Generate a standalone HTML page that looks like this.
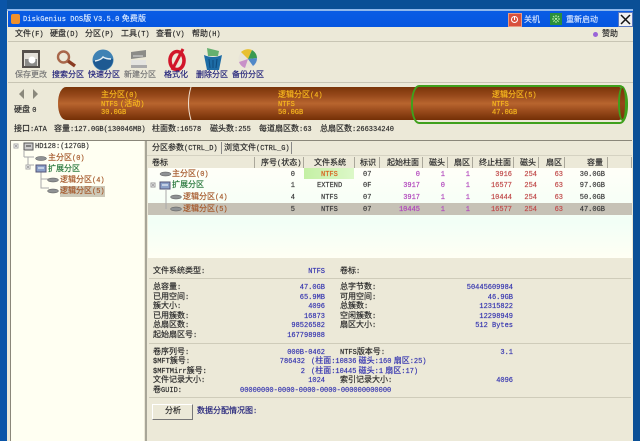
<!DOCTYPE html>
<html><head><meta charset="utf-8"><style>
html,body{margin:0;padding:0;background:#0a4f96}
#w{position:relative;width:640px;height:441px;overflow:hidden;background:#0a4f96;font-family:"Liberation Sans","WenQuanYi Zen Hei","Noto Sans CJK SC",sans-serif;filter:blur(.2px)}
#w div{position:absolute}
.t{position:absolute;font-size:8px;line-height:10px;height:10px;white-space:nowrap;color:#2a2a2a;-webkit-text-stroke:.18px currentColor}
.t i,.m{font-family:"Liberation Mono",monospace;font-style:normal;font-size:7px}
.r{text-align:right;transform:translateX(-100%)}
.n{color:#3636b0}
.g{color:#555}
.b{color:#22227a}
.y{color:#f8b81e}
.o{color:#a5582a}
.p{color:#b044bc}
.d{color:#c04a4a}
.k{color:#3a3a3a}
.s{width:1px;top:157px;height:11px;background:#aaa79a}
.l{left:149px;height:1px;width:482px;background:#cfccba}
svg{position:absolute;overflow:visible}
</style></head><body><div id="w">
<div style="left:0;top:0;width:7px;height:441px;background:#0a55a8"></div>
<div style="left:7px;top:9px;width:626px;height:432px;background:#ece9d8"></div>
<div style="left:7px;top:9px;width:626px;height:2px;background:#8fb8ec"></div>
<div style="left:8px;top:11px;width:625px;height:16px;background:linear-gradient(#0a5ce4,#0656e0)"></div>
<div style="left:11px;top:14px;width:9px;height:10px;background:#f0902c;border-radius:2px"></div>
<span class="t" style="left:23px;top:14px;color:#d8e8ff;letter-spacing:.1px"><i>DiskGenius DOS</i>版 <i>V3.5.0</i> 免费版</span>
<div style="left:508px;top:13px;width:12px;height:12px;background:#d8503c;border:1px solid #e89a80"></div>
<svg style="left:510px;top:15px" width="10" height="10"><circle cx="4.5" cy="4.5" r="3" fill="none" stroke="#fff"/><path d="M4.5 2v3" stroke="#fff"/></svg>
<span class="t" style="left:524px;top:15px;color:#cfe0ff">关机</span>
<div style="left:550px;top:13px;width:12px;height:12px;background:#2a8f3c"></div>
<svg style="left:551px;top:14px" width="10" height="10"><path d="M5 1v8M1 5h8M2 2l6 6M8 2l-6 6" stroke="#b8f0a8" stroke-dasharray="2 1"/></svg>
<span class="t" style="left:566px;top:15px;color:#cfe0ff">重新启动</span>
<div style="left:618px;top:12px;width:13px;height:13px;background:#f0f0f0;border:1px solid #5a78c0"></div>
<svg style="left:619px;top:13px" width="13" height="13"><path d="M2 2l9 9M11 2l-9 9" stroke="#111" stroke-width="1.5"/></svg>

<span class="t" style="left:15px;top:29px">文件<i>(F)</i></span>
<span class="t" style="left:50px;top:29px">硬盘<i>(D)</i></span>
<span class="t" style="left:85px;top:29px">分区<i>(P)</i></span>
<span class="t" style="left:121px;top:29px">工具<i>(T)</i></span>
<span class="t" style="left:156px;top:29px">查看<i>(V)</i></span>
<span class="t" style="left:192px;top:29px">帮助<i>(H)</i></span>
<div style="left:593px;top:32px;width:5px;height:5px;border-radius:50%;background:#9a64d8"></div>
<span class="t" style="left:602px;top:29px">赞助</span>
<div style="left:8px;top:41px;width:625px;height:1px;background:#c8c5b4"></div>

<svg style="left:22px;top:50px" width="19" height="18"><rect width="18" height="18" fill="#55504c"/><rect x="2" y="3" width="14" height="13" fill="#e2dfd8"/><rect x="3" y="9" width="12" height="7" fill="#8a8a88"/><circle cx="10" cy="10" r="3.5" fill="#fff"/></svg>
<svg style="left:56px;top:50px" width="23" height="18"><circle cx="7.5" cy="7" r="5.5" fill="none" stroke="#a8674a" stroke-width="2.4"/><path d="M12 11l7 5" stroke="#8a3c22" stroke-width="3.4"/></svg>
<svg style="left:92px;top:49px" width="22" height="22"><circle cx="11" cy="11" r="10.5" fill="#3f82b4"/><path d="M1 12q10-4 20-2q0 8-8 11q-10 0-12-9z" fill="#1e5a92"/><path d="M3 12q6-1 8-4q3 2 8 2" stroke="#e8f0f4" fill="none" stroke-width="1.4"/></svg>
<svg style="left:130px;top:50px" width="18" height="19"><path d="M1 2l15-2v7l-15 2z" fill="#8c8c88"/><path d="M1 10h15v5h-15z" fill="#e4e4e0"/><path d="M1 15h16v3h-16z" fill="#aaa"/><path d="M3 6h10" stroke="#ddd"/></svg>
<svg style="left:167px;top:48px" width="21" height="23"><ellipse cx="10" cy="12.500" rx="7" ry="9" fill="none" stroke="#d2162a" stroke-width="3.6"/><path d="M16 1l-11 21" stroke="#d2162a" stroke-width="3"/></svg>
<svg style="left:203px;top:48px" width="20" height="23"><path d="M4 0l12 3-1 5h-10z" fill="#66b070"/><path d="M1 7q9 4 18 0l-3 15h-12z" fill="#1d6ca6"/><path d="M6 11l1 9M10 12v8M14 11l-1 9" stroke="#0e4a7c"/></svg>
<svg style="left:238px;top:49px" width="20" height="21"><circle cx="10" cy="10" r="9.500" fill="#e8e4d8"/><path d="M10 10l-7-7a10 10 0 0 1 11-2z" fill="#e8c030"/><path d="M10 10l4-9a10 10 0 0 1 5 8z" fill="#3a9a50"/><path d="M10 10l9-1a10 10 0 0 1-4 8z" fill="#5088c8"/><path d="M10 10l-3 9a10 10 0 0 1-6-6z" fill="#c890c8"/></svg>

<span class="t" style="left:15px;top:70px;color:#777">保存更改</span>
<span class="t b" style="left:52px;top:70px">搜索分区</span>
<span class="t b" style="left:88px;top:70px">快速分区</span>
<span class="t" style="left:124px;top:70px;color:#777">新建分区</span>
<span class="t b" style="left:164px;top:70px">格式化</span>
<span class="t b" style="left:196px;top:70px">删除分区</span>
<span class="t b" style="left:232px;top:70px">备份分区</span>
<div style="left:8px;top:82px;width:625px;height:1px;background:#c8c5b4"></div>

<svg style="left:15px;top:88px" width="24" height="12"><path d="M9 1l-5 5 5 5zM18 1l5 5-5 5z" fill="#8a887c"/></svg>
<span class="t" style="left:14px;top:105px">硬盘 <i>0</i></span>

<div style="left:58px;top:87px;width:569px;height:33px;border-radius:8px/16px;background:linear-gradient(#7a3509,#96481a 25%,#b8652f 50%,#96481a 75%,#743006)"></div>
<svg style="left:186px;top:87px" width="8" height="33"><path d="M5 0q-5 16 0 33" fill="none" stroke="#f0e0d0"/></svg>
<div style="left:411px;top:85px;width:213px;height:35px;border:2px solid #3fa01c;border-radius:8px/18px"></div>
<div style="left:618px;top:86px;width:9px;height:35px;border:2px solid #3fa01c;border-radius:50%;box-sizing:border-box;background:linear-gradient(#7a3509,#94461a,#7a3509)"></div>

<span class="t y" style="left:101px;top:90px">主分区<i>(0)</i></span>
<span class="t y" style="left:101px;top:99px"><i>NTFS</i> <i>(</i>活动<i>)</i></span>
<span class="t y" style="left:101px;top:107px"><i>30.0GB</i></span>
<span class="t y" style="left:278px;top:90px">逻辑分区<i>(4)</i></span>
<span class="t y" style="left:278px;top:99px"><i>NTFS</i></span>
<span class="t y" style="left:278px;top:107px"><i>50.0GB</i></span>
<span class="t y" style="left:492px;top:90px">逻辑分区<i>(5)</i></span>
<span class="t y" style="left:492px;top:99px"><i>NTFS</i></span>
<span class="t y" style="left:492px;top:107px"><i>47.0GB</i></span>

<span class="t" style="left:14px;top:124px">接口<i>:ATA</i></span>
<span class="t" style="left:54px;top:124px">容量<i>:127.0GB(130046MB)</i></span>
<span class="t" style="left:152px;top:124px">柱面数<i>:16578</i></span>
<span class="t" style="left:210px;top:124px">磁头数<i>:255</i></span>
<span class="t" style="left:259px;top:124px">每道扇区数<i>:63</i></span>
<span class="t" style="left:320px;top:124px">总扇区数<i>:266334240</i></span>
<div style="left:10px;top:140px;width:622px;height:1px;background:#8a877a"></div>

<div style="left:10px;top:141px;width:133px;height:300px;background:#fffff2;border-left:1px solid #8a877a"></div>
<div style="left:145px;top:141px;width:2px;height:300px;background:#a8a698"></div>
<div style="left:147px;top:141px;width:485px;height:300px;background:#ece9d8"></div>
<div style="left:148px;top:168px;width:484px;height:90px;background:linear-gradient(#fffff8,#f2fff6 60%,#fffff4)"></div>

<svg style="left:13px;top:143px" width="50" height="60"><rect x="1" y="1" width="4" height="4" fill="#fff" stroke="#aaa"/><path d="M2 3h2" stroke="#555"/><path d="M11 8v6M11 14h10M15 14v8M15 22h6M28 28v17h8M36 36h-8" stroke="#aaa" fill="none"/><rect x="11" y="0" width="9" height="7" fill="#ccc" stroke="#555"/><path d="M13 3h5" stroke="#333"/></svg>
<svg style="left:26px;top:154px" width="40" height="45"><g fill="#8f9294" stroke="#555" stroke-width=".5"><ellipse cx="15" cy="4.500" rx="5.500" ry="2"/><ellipse cx="27" cy="26" rx="5.500" ry="2"/><ellipse cx="27" cy="37" rx="5.500" ry="2"/></g><rect x="0" y="11" width="4" height="4" fill="#fff" stroke="#aaa"/><path d="M1 13h2" stroke="#555"/><rect x="10" y="11" width="10" height="7" fill="#8aa0c8" stroke="#557"/><path d="M12 14h6" stroke="#fff"/></svg>
<span class="t" style="left:35px;top:141px;color:#333"><i>HD128:(127GB)</i></span>
<span class="t o" style="left:48px;top:153px">主分区<i>(0)</i></span>
<span class="t" style="left:48px;top:164px;color:#28783c">扩展分区</span>
<span class="t o" style="left:60px;top:175px">逻辑分区<i>(4)</i></span>
<div style="left:60px;top:186px;width:45px;height:11px;background:#cdc9b8"></div>
<span class="t o" style="left:60px;top:186px">逻辑分区<i>(5)</i></span>

<span class="t" style="left:152px;top:143px">分区参数<i>(CTRL_D)</i></span>
<div style="left:221px;top:142px;width:1px;height:12px;background:#888"></div>
<span class="t" style="left:224px;top:143px">浏览文件<i>(CTRL_G)</i></span>
<div style="left:291px;top:142px;width:1px;height:12px;background:#888"></div>
<div style="left:147px;top:155px;width:485px;height:1px;background:#d5d2c2"></div>

<span class="t" style="left:152px;top:158px">卷标</span>
<span class="t" style="left:261px;top:158px">序号<i>(</i>状态<i>)</i></span>
<span class="t" style="left:314px;top:158px">文件系统</span>
<span class="t" style="left:360px;top:158px">标识</span>
<span class="t" style="left:387px;top:158px">起始柱面</span>
<span class="t" style="left:429px;top:158px">磁头</span>
<span class="t" style="left:454px;top:158px">扇区</span>
<span class="t" style="left:479px;top:158px">终止柱面</span>
<span class="t" style="left:520px;top:158px">磁头</span>
<span class="t" style="left:546px;top:158px">扇区</span>
<span class="t" style="left:587px;top:158px">容量</span>
<div class="s" style="left:254px"></div><div class="s" style="left:303px"></div><div class="s" style="left:354px"></div><div class="s" style="left:379px"></div><div class="s" style="left:422px"></div><div class="s" style="left:447px"></div><div class="s" style="left:472px"></div><div class="s" style="left:513px"></div><div class="s" style="left:538px"></div><div class="s" style="left:564px"></div><div class="s" style="left:607px"></div><div class="s" style="left:631px"></div>

<div style="left:148px;top:203px;width:484px;height:12px;background:#c6c2b6"></div>
<div style="left:304px;top:168px;width:50px;height:11px;background:linear-gradient(90deg,#c4f0a4,#dcf8c8)"></div>

<svg style="left:150px;top:168px" width="40" height="46"><g fill="#8f9294" stroke="#555" stroke-width=".5"><ellipse cx="15.500" cy="6" rx="5.500" ry="2"/><ellipse cx="26" cy="29" rx="5.500" ry="2"/><ellipse cx="26" cy="41" rx="5.500" ry="2"/></g><rect x="1" y="15" width="4" height="4" fill="#fff" stroke="#999"/><path d="M2 17h2" stroke="#555"/><rect x="10" y="14" width="10" height="7" fill="#8aa0c8" stroke="#557"/><path d="M12 17h6" stroke="#fff"/><path d="M16 22v19" stroke="#aaa"/></svg>
<span class="t o" style="left:172px;top:169px">主分区<i>(0)</i></span>
<span class="t" style="left:172px;top:180px;color:#28783c">扩展分区</span>
<span class="t o" style="left:183px;top:192px">逻辑分区<i>(4)</i></span>
<span class="t o" style="left:183px;top:204px">逻辑分区<i>(5)</i></span>

<span class="t r k" style="left:295px;top:169px"><i>0</i></span>
<span class="t r k" style="left:295px;top:180px"><i>1</i></span>
<span class="t r k" style="left:295px;top:192px"><i>4</i></span>
<span class="t r k" style="left:295px;top:204px"><i>5</i></span>
<span class="t" style="left:321px;top:169px;color:#d8601c"><i>NTFS</i></span>
<span class="t k" style="left:317px;top:180px"><i>EXTEND</i></span>
<span class="t k" style="left:321px;top:192px"><i>NTFS</i></span>
<span class="t k" style="left:321px;top:204px"><i>NTFS</i></span>
<span class="t k" style="left:363px;top:169px"><i>07</i></span>
<span class="t k" style="left:363px;top:180px"><i>0F</i></span>
<span class="t k" style="left:363px;top:192px"><i>07</i></span>
<span class="t k" style="left:363px;top:204px"><i>07</i></span>

<span class="t r p" style="left:420px;top:169px"><i>0</i></span><span class="t r p" style="left:445px;top:169px"><i>1</i></span><span class="t r p" style="left:470px;top:169px"><i>1</i></span><span class="t r d" style="left:512px;top:169px"><i>3916</i></span><span class="t r d" style="left:537px;top:169px"><i>254</i></span><span class="t r d" style="left:563px;top:169px"><i>63</i></span><span class="t r k" style="left:605px;top:169px"><i>30.0GB</i></span>
<span class="t r p" style="left:420px;top:180px"><i>3917</i></span><span class="t r p" style="left:445px;top:180px"><i>0</i></span><span class="t r p" style="left:470px;top:180px"><i>1</i></span><span class="t r d" style="left:512px;top:180px"><i>16577</i></span><span class="t r d" style="left:537px;top:180px"><i>254</i></span><span class="t r d" style="left:563px;top:180px"><i>63</i></span><span class="t r k" style="left:605px;top:180px"><i>97.0GB</i></span>
<span class="t r p" style="left:420px;top:192px"><i>3917</i></span><span class="t r p" style="left:445px;top:192px"><i>1</i></span><span class="t r p" style="left:470px;top:192px"><i>1</i></span><span class="t r d" style="left:512px;top:192px"><i>10444</i></span><span class="t r d" style="left:537px;top:192px"><i>254</i></span><span class="t r d" style="left:563px;top:192px"><i>63</i></span><span class="t r k" style="left:605px;top:192px"><i>50.0GB</i></span>
<span class="t r p" style="left:420px;top:204px"><i>10445</i></span><span class="t r p" style="left:445px;top:204px"><i>1</i></span><span class="t r p" style="left:470px;top:204px"><i>1</i></span><span class="t r d" style="left:512px;top:204px"><i>16577</i></span><span class="t r d" style="left:537px;top:204px"><i>254</i></span><span class="t r d" style="left:563px;top:204px"><i>63</i></span><span class="t r k" style="left:605px;top:204px"><i>47.0GB</i></span>

<span class="t" style="left:153px;top:266px">文件系统类型<i>:</i></span>
<span class="t r n" style="left:325px;top:266px"><i>NTFS</i></span>
<span class="t" style="left:340px;top:266px">卷标<i>:</i></span>
<div class="l" style="top:278px"></div>

<span class="t" style="left:153px;top:282px">总容量<i>:</i></span><span class="t r n" style="left:325px;top:282px"><i>47.0GB</i></span><span class="t" style="left:340px;top:282px">总字节数<i>:</i></span><span class="t r n" style="left:513px;top:282px"><i>50445609984</i></span>
<span class="t" style="left:153px;top:292px">已用空间<i>:</i></span><span class="t r n" style="left:325px;top:292px"><i>65.9MB</i></span><span class="t" style="left:340px;top:292px">可用空间<i>:</i></span><span class="t r n" style="left:513px;top:292px"><i>46.9GB</i></span>
<span class="t" style="left:153px;top:301px">簇大小<i>:</i></span><span class="t r n" style="left:325px;top:301px"><i>4096</i></span><span class="t" style="left:340px;top:301px">总簇数<i>:</i></span><span class="t r n" style="left:513px;top:301px"><i>12315822</i></span>
<span class="t" style="left:153px;top:311px">已用簇数<i>:</i></span><span class="t r n" style="left:325px;top:311px"><i>16873</i></span><span class="t" style="left:340px;top:311px">空闲簇数<i>:</i></span><span class="t r n" style="left:513px;top:311px"><i>12298949</i></span>
<span class="t" style="left:153px;top:320px">总扇区数<i>:</i></span><span class="t r n" style="left:325px;top:320px"><i>98526582</i></span><span class="t" style="left:340px;top:320px">扇区大小<i>:</i></span><span class="t r n" style="left:513px;top:320px"><i>512 Bytes</i></span>
<span class="t" style="left:153px;top:330px">起始扇区号<i>:</i></span><span class="t r n" style="left:325px;top:330px"><i>167798988</i></span>
<div class="l" style="top:343px"></div>

<span class="t" style="left:153px;top:347px">卷序列号<i>:</i></span><span class="t r n" style="left:325px;top:347px"><i>000B-0462</i></span><span class="t" style="left:340px;top:347px"><i>NTFS</i>版本号<i>:</i></span><span class="t r n" style="left:513px;top:347px"><i>3.1</i></span>
<span class="t" style="left:153px;top:356px"><i>$MFT</i>簇号<i>:</i></span><span class="t r n" style="left:305px;top:356px"><i>786432</i></span><span class="t n" style="left:311px;top:356px"><i>(</i>柱面<i>:10836</i> 磁头<i>:160</i> 扇区<i>:25)</i></span>
<span class="t" style="left:153px;top:366px"><i>$MFTMirr</i>簇号<i>:</i></span><span class="t r n" style="left:305px;top:366px"><i>2</i></span><span class="t n" style="left:311px;top:366px"><i>(</i>柱面<i>:10445</i> 磁头<i>:1</i> 扇区<i>:17)</i></span>
<span class="t" style="left:153px;top:375px">文件记录大小<i>:</i></span><span class="t r n" style="left:325px;top:375px"><i>1024</i></span><span class="t" style="left:340px;top:375px">索引记录大小<i>:</i></span><span class="t r n" style="left:513px;top:375px"><i>4096</i></span>
<span class="t" style="left:153px;top:385px">卷<i>GUID:</i></span><span class="t n" style="left:240px;top:385px"><i>00000000-0000-0000-0000-000000000000</i></span>
<div class="l" style="top:397px"></div>

<div style="left:152px;top:404px;width:39px;height:14px;background:#ece9d8;border:1px solid #fff;border-right-color:#777;border-bottom-color:#777"></div>
<span class="t" style="left:165px;top:406px">分析</span>
<span class="t b" style="left:197px;top:406px">数据分配情况图<i>:</i></span>
</div></body></html>
